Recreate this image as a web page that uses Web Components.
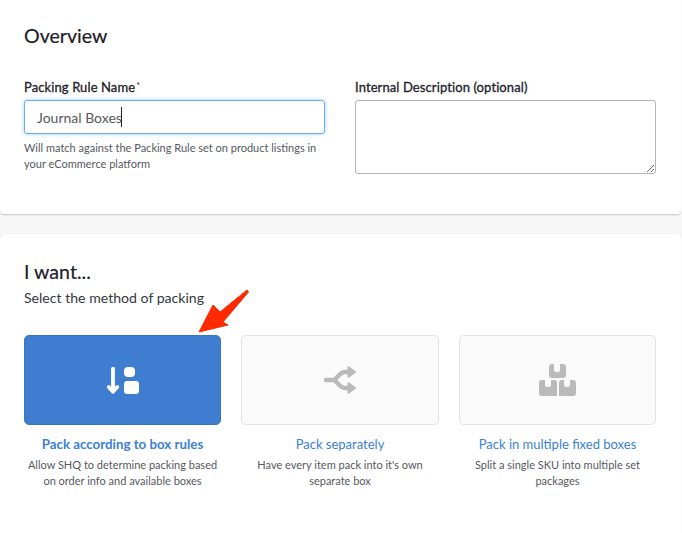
<!DOCTYPE html>
<html lang="en">
<head>
<meta charset="utf-8">
<title>Packing Rule</title>
<style>
  html, body { margin: 0; height: 533px; overflow: hidden; }
  body {
    background: #f7f7f7;
    color: #1d2129;
    font-family: "Lato", "Liberation Sans", sans-serif;
  }
</style>
</head>
<body>
<rule-page>
  <panel-card slot="overview" heading="Overview" kind="overview">
    <two-columns>
      <form-field label="Packing Rule Name" required
        hint="Will match against the Packing Rule set on product listings in your eCommerce platform">
        <text-box value="Journal Boxes"></text-box>
      </form-field>
      <form-field label="Internal Description (optional)">
        <area-box></area-box>
      </form-field>
    </two-columns>
  </panel-card>
  <panel-card slot="method" heading="I want..." sub="Select the method of packing" kind="method">
    <method-grid>
      <method-option icon="rules" selected title="Pack according to box rules"
        text="Allow SHQ to determine packing based on order info and available boxes"></method-option>
      <method-option icon="split" title="Pack separately"
        text="Have every item pack into it's own separate box"></method-option>
      <method-option icon="boxes" title="Pack in multiple fixed boxes"
        text="Split a single SKU into multiple set packages"></method-option>
    </method-grid>
  </panel-card>
  <red-arrow slot="overlay"></red-arrow>
</rule-page>

<script>
class RulePage extends HTMLElement {
  constructor() {
    super();
    this.attachShadow({ mode: 'open' });
    this.shadowRoot.innerHTML = `
      <style>
        :host { display: flex; flex-direction: column; gap: 20px; position: relative; width: 681px; height: 533px; overflow: hidden; }
        ::slotted(panel-card) { flex: none; }
      </style>
      <slot name="overview"></slot>
      <slot name="method"></slot>
      <slot name="overlay"></slot>
    `;
  }
}

class PanelCard extends HTMLElement {
  constructor() {
    super();
    this.attachShadow({ mode: 'open' });
  }

  connectedCallback() {
    const heading = this.getAttribute('heading');
    const sub = this.getAttribute('sub');
    const overview = this.getAttribute('kind') === 'overview';
    this.shadowRoot.innerHTML = `
      <style>
        :host {
          display: block;
          box-sizing: border-box;
          background: #fff;
          border-radius: ${overview ? '0 0 4px 4px' : '4px 4px 0 0'};
          box-shadow: ${overview ? '0 1px 2px rgba(0,0,0,.2)' : '0 0 1px rgba(0,0,0,.2)'};
          height: ${overview ? '214px' : '320px'};
          padding: ${overview ? '24px' : '26px'} 25px 0 24px;
        }
        h2 { margin: 0; font-size: 19.6px; line-height: 24px; font-weight: 400; color: #1d2129; -webkit-text-stroke: .2px #1d2129; }
        p { margin: 5px 0 0; font-size: 14.1px; line-height: 18px; color: #33383f; }
        .body { margin-top: ${overview ? '30px' : '28px'}; }
      </style>
      <h2>${heading}</h2>
      ${sub ? `<p>${sub}</p>` : ''}
      <div class="body"><slot></slot></div>
    `;
  }
}

class TwoColumns extends HTMLElement {
  constructor() {
    super();
    this.attachShadow({ mode: 'open' });
    this.shadowRoot.innerHTML = `
      <style>
        :host { display: grid; grid-template-columns: 301px 301px; column-gap: 30px; }
      </style>
      <slot></slot>
    `;
  }
}

class FormField extends HTMLElement {
  constructor() {
    super();
    this.attachShadow({ mode: 'open' });
  }

  connectedCallback() {
    const label = this.getAttribute('label');
    const hint = this.getAttribute('hint');
    const mark = this.hasAttribute('required') ? '<sup>*</sup>' : '';
    this.shadowRoot.innerHTML = `
      <style>
        :host { display: block; }
        label { display: block; font-size: 13px; line-height: 18px; font-weight: 400; letter-spacing: .1px; -webkit-text-stroke: .3px #1d2129; color: #1d2129; margin-bottom: 4px; }
        sup { font-size: 9px; line-height: 0; font-weight: 400; -webkit-text-stroke: 0; vertical-align: 3px; margin-left: 1px; }
        .hint { margin: 6px 0 0; font-size: 11px; line-height: 16px; color: #55595f; }
      </style>
      <label>${label}${mark}</label>
      <slot></slot>
      ${hint ? `<p class="hint">${hint}</p>` : ''}
    `;
  }
}

class TextBox extends HTMLElement {
  constructor() {
    super();
    this.attachShadow({ mode: 'open' });
  }

  connectedCallback() {
    this.shadowRoot.innerHTML = `
      <style>
        :host {
          display: flex;
          align-items: center;
          box-sizing: border-box;
          height: 34px;
          padding: 0 12px;
          background: #fff;
          border: 1px solid #66aeef;
          border-radius: 3px;
          box-shadow: 0 0 4px rgba(102,174,239,.6);
          font-size: 14px;
          color: #55595f;
        }
        i { display: inline-block; width: 1px; height: 20px; margin-left: -1px; background: #222; }
      </style>
      <span>${this.getAttribute('value')}</span><i></i>
    `;
  }
}

class AreaBox extends HTMLElement {
  constructor() {
    super();
    this.attachShadow({ mode: 'open' });
    this.shadowRoot.innerHTML = `
      <style>
        :host { display: block; height: 74px; }
        textarea {
          display: block;
          box-sizing: border-box;
          width: 301px;
          height: 74px;
          margin: 0;
          background: #fff;
          border: 1px solid #b4b4b4;
          border-radius: 3px;
          outline: none;
        }
      </style>
      <textarea></textarea>
    `;
  }
}

class MethodGrid extends HTMLElement {
  constructor() {
    super();
    this.attachShadow({ mode: 'open' });
    this.shadowRoot.innerHTML = `
      <style>
        :host { display: grid; grid-template-columns: 197px 198px 197px; column-gap: 20px; }
      </style>
      <slot></slot>
    `;
  }
}

const METHOD_ICONS = {
  rules: `<svg width="32" height="27" viewBox="0 0 32 27">
      <path d="M6 1.800V24.800M1.800 20 6 24.800l4.200-4.800" fill="none" stroke="currentColor" stroke-width="3.800" stroke-linecap="round" stroke-linejoin="round"/>
      <rect x="17" y="0" width="11" height="10" rx="4" fill="currentColor"/>
      <rect x="17" y="14" width="15" height="13" rx="3" fill="currentColor"/>
    </svg>`,
  split: `<svg width="32" height="28" viewBox="0 0 32 28">
      <path d="M2 14H9C13 14 15 6 21 6H26M9 14C13 14 15 22 21 22H26" fill="none" stroke="currentColor" stroke-width="4.400" stroke-linecap="round"/>
      <path d="M24.500 1.200 31 6 24.500 10.800ZM24.500 17.200 31 22 24.500 26.800Z" fill="currentColor" stroke="currentColor" stroke-width="2" stroke-linejoin="round"/>
    </svg>`,
  boxes: `<svg width="37" height="32" viewBox="0 0 37 32">
      <path d="M13 0h2v6a2 2 0 0 0 2 2h2a2 2 0 0 0 2-2V0h3a3 3 0 0 1 3 3v8a3 3 0 0 1-3 3H13a3 3 0 0 1-3-3V3a3 3 0 0 1 3-3Z" fill="currentColor"/>
      <path d="M3 16h3v5a2 2 0 0 0 2 2h2a2 2 0 0 0 2-2v-5h3a3 3 0 0 1 3 3v13H3a3 3 0 0 1-3-3V19a3 3 0 0 1 3-3Z" fill="currentColor"/>
      <path d="M20 19a3 3 0 0 1 3-3h2v5a2 2 0 0 0 2 2h2a2 2 0 0 0 2-2v-5h3a3 3 0 0 1 3 3v10a3 3 0 0 1-3 3H20Z" fill="currentColor"/>
    </svg>`
};

class MethodOption extends HTMLElement {
  constructor() {
    super();
    this.attachShadow({ mode: 'open' });
  }

  connectedCallback() {
    const selected = this.hasAttribute('selected');
    this.shadowRoot.innerHTML = `
      <style>
        :host { display: block; text-align: center; }
        .tile {
          display: flex;
          align-items: center;
          justify-content: center;
          box-sizing: border-box;
          height: 90px;
          border-radius: 5px;
          border: 1px solid ${selected ? '#3a75bf' : '#e2e2e2'};
          background: ${selected ? '#3f7dd0' : '#fafafa'};
          color: ${selected ? '#fff' : '#bababa'};
        }
        h3 { margin: 10px 0 0; font-size: ${selected ? '13.300px' : '13px'}; line-height: 18px; font-weight: ${selected ? 700 : 400}; color: #3a7fd5; }
        p { margin: 4px 0 0; padding: 0 2px; font-size: 11px; line-height: 16px; color: #55595f; }
      </style>
      <div class="tile">${METHOD_ICONS[this.getAttribute('icon')]}</div>
      <h3>${this.getAttribute('title')}</h3>
      <p>${this.getAttribute('text')}</p>
    `;
    this.removeAttribute('title');
  }
}

class RedArrow extends HTMLElement {
  constructor() {
    super();
    this.attachShadow({ mode: 'open' });
    this.shadowRoot.innerHTML = `
      <style>
        :host { position: absolute; left: 196px; top: 287px; width: 54px; height: 48px; }
        svg { display: block; }
      </style>
      <svg width="54" height="48" viewBox="0 0 54 48">
        <path d="M3 45 17 18 24 25 51 3 52.500 5 27 35 32 38Z" fill="#ff2a00" stroke="#ff2a00" stroke-width="1" stroke-linejoin="round"/>
      </svg>
    `;
  }
}

customElements.define('rule-page', RulePage);
customElements.define('panel-card', PanelCard);
customElements.define('two-columns', TwoColumns);
customElements.define('form-field', FormField);
customElements.define('text-box', TextBox);
customElements.define('area-box', AreaBox);
customElements.define('method-grid', MethodGrid);
customElements.define('method-option', MethodOption);
customElements.define('red-arrow', RedArrow);
</script>
</body>
</html>
